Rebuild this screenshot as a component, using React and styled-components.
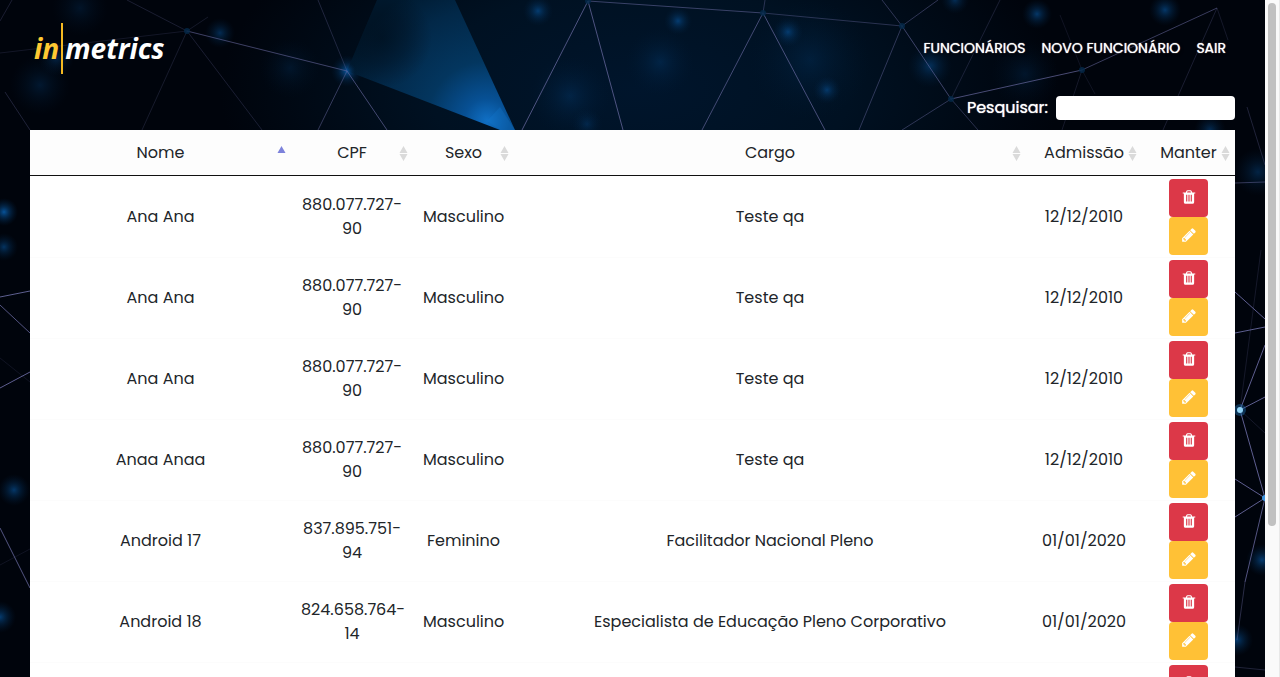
import React from "react";
import styled, { createGlobalStyle } from "styled-components";

const GlobalStyle = createGlobalStyle`
  *, *::before, *::after { box-sizing: border-box; }
  body {
    margin: 0;
    background: #00030a;
    color: #212529;
    font-family: Poppins, Inter, "Open Sans", sans-serif;
    font-size: 16px;
    line-height: 24px;
  }
`;

const Shell = styled.div`
  display: flex;
  height: 100vh;
  overflow: hidden;
`;

const Page = styled.div`
  position: relative;
  flex: 1;
  min-width: 0;
  height: 100%;
  overflow: hidden;
`;

const Backdrop = styled.svg`
  position: absolute;
  inset: 0;
  width: 100%;
  height: 100%;
`;

const Content = styled.div`
  position: relative;
  padding: 0 30px;
`;

const Header = styled.header`
  display: flex;
  align-items: center;
  justify-content: space-between;
  height: 96px;
  padding: 0 1px 0 4px;
`;

const Logo = styled.a`
  display: flex;
  align-items: center;
  gap: 2px;
  color: #ffffff;
  text-decoration: none;
  font-family: "Open Sans", sans-serif;
  font-size: 28px;
  line-height: 32px;
  font-weight: 700;
  font-style: italic;
`;

const LogoAccent = styled.span`
  color: #ffc932;
`;

const LogoBar = styled.span`
  width: 2px;
  height: 51px;
  background: #f5b921;
`;

const Nav = styled.nav`
  display: flex;
`;

const NavLink = styled.a`
  padding: 8px;
  color: #ffffff;
  font-size: 14px;
  font-weight: 400;
  line-height: 24px;
  text-decoration: none;
  text-shadow: 0 0 1px #ffffff, 1px 1px 3px #000000;
`;

const Search = styled.label`
  display: flex;
  align-items: center;
  justify-content: flex-end;
  gap: 8px;
  height: 24px;
  margin-bottom: 10px;
  color: #ffffff;
  text-shadow: 0 0 1px #ffffff;
`;

const SearchInput = styled.input`
  width: 179px;
  height: 24px;
  padding: 0 8px;
  border: 0;
  border-radius: 4px;
  background: #ffffff;
  font: inherit;
`;

const Table = styled.table`
  width: 100%;
  table-layout: fixed;
  border-collapse: separate;
  border-spacing: 0;
  background: #ffffff;
  text-align: center;
`;

const Col = styled.col`
  width: ${(p) => p.$width};
`;

const HeadCell = styled.th`
  position: relative;
  height: 46px;
  padding: 0;
  border-bottom: 1px solid #111111;
  background: #fdfdfd;
  font-weight: 400;
`;

const SortIcon = styled.svg`
  position: absolute;
  right: 5px;
  top: 16px;
  width: 9px;
  height: 15px;
`;

const Cell = styled.td`
  height: 81px;
  padding: 2px 10px;
  border-top: 1px solid ${(p) => (p.$first ? "#ffffff" : "#fcfcfc")};
  vertical-align: middle;
`;

const Actions = styled.div`
  display: flex;
  flex-direction: column;
  align-items: center;
`;

const ActionButton = styled.button`
  display: flex;
  align-items: center;
  justify-content: center;
  width: 39px;
  height: 38px;
  padding: 0 0 2px;
  border: 0;
  border-radius: 4px;
  background: ${(p) => (p.$danger ? "#dc3848" : "#ffc136")};
  color: #ffffff;
`;

const Track = styled.div`
  flex: none;
  width: 15px;
  padding: 3px;
  background: #fafafa;
  border-right: 1px solid #e8e8e8;
`;

const Thumb = styled.div`
  width: 8px;
  height: 78%;
  border-radius: 4px;
  background: #c1c1c1;
`;

const TRASH =
  "M704 1376v-704q0-14-9-23t-23-9h-64q-14 0-23 9t-9 23v704q0 14 9 23t23 9h64q14 0 23-9t9-23zm256 0v-704q0-14-9-23t-23-9h-64q-14 0-23 9t-9 23v704q0 14 9 23t23 9h64q14 0 23-9t9-23zm256 0v-704q0-14-9-23t-23-9h-64q-14 0-23 9t-9 23v704q0 14 9 23t23 9h64q14 0 23-9t9-23zm-544-992h448l-48-117q-7-9-17-11h-317q-10 2-17 11zm928 32v64q0 14-9 23t-23 9h-96v948q0 83-47 143.500t-113 60.500h-832q-66 0-113-58.500t-47-141.500v-952h-96q-14 0-23-9t-9-23v-64q0-14 9-23t23-9h309l70-167q15-37 54-63t79-26h320q40 0 79 26t54 63l70 167h309q14 0 23 9t9 23z";
const PENCIL =
  "M491 1536l91-91-235-235-91 91v107h128v128h107zm523-928q0-22-22-22-10 0-17 7l-542 542q-7 7-7 17 0 22 22 22 10 0 17-7l542-542q7-7 7-17zm-54-192l416 416-832 832h-416v-416zm683 96q0 53-37 90l-166 166-416-416 166-165q36-38 90-38 53 0 91 38l235 234q37 39 37 91z";

const Glyph = ({ d }) => (
  <svg width="16" height="16" viewBox="0 0 1792 1792" fill="currentColor" aria-hidden="true">
    <path d={d} />
  </svg>
);

const Sort = ({ active }) => (
  <SortIcon viewBox="0 0 9 15" aria-hidden="true">
    {active ? (
      <path d="M4.500 0L8.500 7H0.500z" fill="#7d82db" />
    ) : (
      <path d="M4.500 0L8.500 7H0.500zM0.500 8H8.500L4.500 15z" fill="#dadada" />
    )}
  </SortIcon>
);

// Network mesh: [x1, y1, x2, y2, opacity]
const LINES = [
  [187, 31, 127, 0, 0.25], [187, 31, 0, 53, 0.18], [187, 31, 142, 130, 0.22],
  [187, 31, 262, 130, 0.25], [187, 31, 347, 71, 0.6], [187, 31, 208, 17, 0.2],
  [347, 71, 318, 0, 0.3], [347, 71, 318, 130, 0.5], [347, 71, 387, 130, 0.65],
  [0, 21, 12, 0, 0.25], [5, 92, 30, 130, 0.3],
  [588, 1, 522, 130, 0.75], [588, 1, 623, 130, 0.75], [588, 1, 763, 13, 0.55],
  [763, 13, 765, 0, 0.4], [763, 13, 702, 130, 0.65], [763, 13, 825, 130, 0.7],
  [763, 13, 902, 26, 0.4], [902, 26, 882, 0, 0.45], [902, 26, 938, 0, 0.45],
  [902, 26, 859, 130, 0.45], [902, 26, 951, 99, 0.6], [951, 99, 902, 130, 0.45],
  [951, 99, 978, 130, 0.4], [951, 99, 1082, 70, 0.7], [951, 99, 1000, 0, 0.25],
  [1082, 70, 1062, 130, 0.2], [1082, 70, 1217, 8, 0.55], [1082, 70, 1060, 15, 0.15],
  [1082, 70, 1095, 94, 0.15], [1217, 8, 1163, 130, 0.25], [1217, 8, 1228, 40, 0.2],
  [1247, 107, 1265, 165, 0.3], [1235, 183, 1265, 182, 0.5],
  [0, 297, 30, 291, 0.9], [0, 305, 30, 333, 0.8], [0, 388, 30, 372, 0.9],
  [0, 528, 30, 588, 0.8], [0, 358, 30, 382, 0.15], [0, 565, 30, 549, 0.15],
  [1235, 292, 1265, 319, 0.9], [1235, 333, 1265, 327, 0.9], [1240, 410, 1265, 345, 0.9],
  [1240, 410, 1265, 397, 0.9], [1240, 410, 1265, 498, 0.9], [1240, 410, 1261, 250, 0.2],
  [1240, 410, 1265, 433, 0.2], [1265, 498, 1235, 479, 0.9], [1265, 498, 1235, 517, 0.9],
  [1265, 498, 1245, 582, 0.8], [1245, 582, 1237, 640, 0.4], [1235, 667, 1265, 670, 0.3],
];

// Soft lights: [cx, cy, radius, opacity]
const GLOWS = [
  [220, 33, 15, 0.5], [347, 71, 16, 0.8], [80, 8, 28, 0.2], [40, 85, 30, 0.25],
  [290, 68, 30, 0.18], [56, 58, 18, 0.4], [538, 11, 15, 0.65], [678, 21, 14, 0.65],
  [788, 32, 15, 0.65], [827, 90, 14, 0.6], [660, 62, 34, 0.25], [570, 96, 40, 0.25],
  [587, 124, 16, 0.3], [930, 66, 22, 0.5], [1037, 14, 15, 0.65], [1165, 10, 16, 0.65],
  [955, 0, 14, 0.5], [1025, 74, 34, 0.2], [1210, 130, 16, 0.5], [1258, 172, 24, 0.4],
  [4, 212, 14, 1], [4, 247, 14, 0.6], [14, 490, 16, 0.65], [0, 617, 16, 0.7],
  [1262, 560, 16, 0.7], [1237, 640, 16, 0.7], [810, 60, 60, 0.2],
];

const NODES = [
  [187, 31], [588, 1], [763, 13], [902, 26], [951, 99], [1082, 70],
];

const Background = () => (
  <Backdrop viewBox="0 0 1265 677" preserveAspectRatio="xMidYMin slice" aria-hidden="true">
    <defs>
      <radialGradient id="glow">
        <stop offset="0" stopColor="#07539a" />
        <stop offset="0.4" stopColor="#053c70" stopOpacity="0.6" />
        <stop offset="1" stopColor="#02203f" stopOpacity="0" />
      </radialGradient>
      <radialGradient id="haze" gradientUnits="userSpaceOnUse" cx="640" cy="90" r="420" gradientTransform="matrix(1 0 0 0.5 0 45)">
        <stop offset="0" stopColor="#00152c" />
        <stop offset="0.5" stopColor="#001122" />
        <stop offset="1" stopColor="#00040c" />
      </radialGradient>
      <radialGradient id="beam" gradientUnits="userSpaceOnUse" cx="487" cy="121" r="150">
        <stop offset="0" stopColor="#1070c6" />
        <stop offset="0.15" stopColor="#075094" />
        <stop offset="0.4" stopColor="#03365f" />
        <stop offset="0.75" stopColor="#022848" />
        <stop offset="1" stopColor="#001a30" />
      </radialGradient>
      <radialGradient id="shade" gradientUnits="userSpaceOnUse" cx="382" cy="38" r="50">
        <stop offset="0" stopColor="#000d1a" stopOpacity="0.65" />
        <stop offset="0.5" stopColor="#000d1a" stopOpacity="0.4" />
        <stop offset="1" stopColor="#000d1a" stopOpacity="0" />
      </radialGradient>
    </defs>
    <rect width="1265" height="677" fill="url(#haze)" />
    {GLOWS.map(([x, y, r, o]) => (
      <circle key={`${x}-${y}`} cx={x} cy={y} r={r} opacity={o} fill="url(#glow)" />
    ))}
    <path d="M347 71L377 0H455L515 130H500z" fill="url(#beam)" />
    <path d="M347 71L377 0H455L515 130H500z" fill="url(#shade)" />
    <path d="M487 121L500 107L515 130H500z" fill="#1577cc" opacity="0.3" />
    <circle cx="347" cy="71" r="9" fill="url(#glow)" />
    <g stroke="#68699f">
      {LINES.map(([x1, y1, x2, y2, o]) => (
        <line key={`${x1}-${y1}-${x2}-${y2}`} x1={x1} y1={y1} x2={x2} y2={y2} opacity={o} />
      ))}
    </g>
    {NODES.map(([x, y]) => (
      <circle key={x} cx={x} cy={y} r="3" fill="#04294a" opacity="0.8" />
    ))}
    <circle cx="1240" cy="410" r="6" fill="#1b76bb" opacity="0.4" />
    <circle cx="1240" cy="410" r="3" fill="#8fd2f5" />
    <circle cx="1265" cy="498" r="3" fill="#3c93de" />
  </Backdrop>
);

const COLUMNS = [
  { label: "Nome", width: "261px" },
  { label: "CPF", width: "122px" },
  { label: "Sexo", width: "101px" },
  { label: "Cargo", width: "auto" },
  { label: "Admissão", width: "116px" },
  { label: "Manter", width: "93px" },
];

const ROWS = [
  ["Ana Ana", "880.077.727-", "90", "Masculino", "Teste qa", "12/12/2010"],
  ["Ana Ana", "880.077.727-", "90", "Masculino", "Teste qa", "12/12/2010"],
  ["Ana Ana", "880.077.727-", "90", "Masculino", "Teste qa", "12/12/2010"],
  ["Anaa Anaa", "880.077.727-", "90", "Masculino", "Teste qa", "12/12/2010"],
  ["Android 17", "837.895.751-", "94", "Feminino", "Facilitador Nacional Pleno", "01/01/2020"],
  ["Android 18", "824.658.764-", "14", "Masculino", "Especialista de Educação Pleno Corporativo", "01/01/2020"],
  ["", "", "", "", "", ""],
];

export default function App() {
  return (
    <Shell>
      <GlobalStyle />
      <Page>
        <Background />
        <Content>
          <Header>
            <Logo href="#">
              <LogoAccent>in</LogoAccent>
              <LogoBar />
              <span>metrics</span>
            </Logo>
            <Nav>
              <NavLink href="#">FUNCIONÁRIOS</NavLink>
              <NavLink href="#">NOVO FUNCIONÁRIO</NavLink>
              <NavLink href="#">SAIR</NavLink>
            </Nav>
          </Header>
          <Search>
            Pesquisar:
            <SearchInput type="search" />
          </Search>
          <Table>
            <colgroup>
              {COLUMNS.map((c) => (
                <Col key={c.label} $width={c.width} />
              ))}
            </colgroup>
            <thead>
              <tr>
                {COLUMNS.map((c, i) => (
                  <HeadCell key={c.label} scope="col">
                    {c.label}
                    <Sort active={i === 0} />
                  </HeadCell>
                ))}
              </tr>
            </thead>
            <tbody>
              {ROWS.map(([name, cpf, digits, gender, role, date], i) => (
                <tr key={i}>
                  <Cell $first={i === 0}>{name}</Cell>
                  <Cell $first={i === 0}>
                    {cpf}
                    <br />
                    {digits}
                  </Cell>
                  <Cell $first={i === 0}>{gender}</Cell>
                  <Cell $first={i === 0}>{role}</Cell>
                  <Cell $first={i === 0}>{date}</Cell>
                  <Cell $first={i === 0}>
                    <Actions>
                      <ActionButton type="button" $danger aria-label="Excluir">
                        <Glyph d={TRASH} />
                      </ActionButton>
                      <ActionButton type="button" aria-label="Editar">
                        <Glyph d={PENCIL} />
                      </ActionButton>
                    </Actions>
                  </Cell>
                </tr>
              ))}
            </tbody>
          </Table>
        </Content>
      </Page>
      <Track>
        <Thumb />
      </Track>
    </Shell>
  );
}
